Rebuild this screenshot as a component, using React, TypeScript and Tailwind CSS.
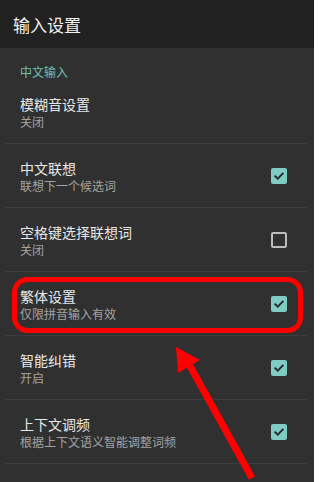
import React from "react";

type Item = {
  title: string;
  summary: string;
  checked?: boolean;
};

const items: Item[] = [
  { title: "模糊音设置", summary: "关闭" },
  { title: "中文联想", summary: "联想下一个候选词", checked: true },
  { title: "空格键选择联想词", summary: "关闭", checked: false },
  { title: "繁体设置", summary: "仅限拼音输入有效", checked: true },
  { title: "智能纠错", summary: "开启", checked: true },
  { title: "上下文调频", summary: "根据上下文语义智能调整词频", checked: true },
  { title: "云输入", summary: "关闭", checked: true },
];

function CheckBox({ checked }: { checked: boolean }) {
  if (checked) {
    return (
      <div className="flex h-[16px] w-[16px] items-center justify-center rounded-[2px] bg-[#80cbc4]">
        <svg width="12" height="12" viewBox="0 0 12 12" fill="none">
          <path d="M2.2 6.2 L4.8 8.7 L9.8 3.5" stroke="#262626" strokeWidth="1.8" strokeLinecap="square" />
        </svg>
      </div>
    );
  }
  return <div className="h-[16px] w-[16px] rounded-[2px] border-2 border-[#bdbdbd]" />;
}

export default function App() {
  return (
    <div
      className="relative h-[482px] w-[314px] overflow-hidden bg-[#303030]"
      style={{ fontFamily: '"Noto Sans CJK SC", "Noto Sans", sans-serif' }}
    >
      {/* Toolbar */}
      <div className="h-[48px] bg-[#212121] pl-[13px] text-[17px] leading-[49px] text-[#f2f2f2]">
        输入设置
      </div>

      {/* Category */}
      <div className="h-[32px] pl-[20px] pt-[16px] text-[12px] leading-[16px] text-[#6dc0b4]">
        中文输入
      </div>

      {/* Preferences */}
      <ul className="flex flex-col">
        {items.map((item, i) => (
          <li key={i} className="flex flex-col">
            <div className="flex h-[63px] items-start pl-[20px] pr-[27px] pt-[14px]">
              <div className="flex flex-1 flex-col">
                <span className="text-[14px] leading-[20px] text-[#e8e8e8]">{item.title}</span>
                <span className="text-[12px] leading-[16px] text-[#a4a4a4]">{item.summary}</span>
              </div>
              {item.checked !== undefined && (
                <div className="mt-[10px]">
                  <CheckBox checked={item.checked} />
                </div>
              )}
            </div>
            <div className="ml-[5px] mr-[7px] h-px bg-[#3d3d3d]" />
          </li>
        ))}
      </ul>

      {/* Red annotation drawn over the screenshot */}
      <svg className="pointer-events-none absolute left-0 top-0" width="314" height="482" viewBox="0 0 314 482">
        <rect x="14.5" y="279.5" width="286" height="51" rx="13" fill="none" stroke="#ff0000" strokeWidth="5" />
        <line x1="190" y1="366" x2="252" y2="478" stroke="#ff0000" strokeWidth="7" />
        <polygon points="176,347 200,360 178,373" fill="#ff0000" />
      </svg>
    </div>
  );
}
